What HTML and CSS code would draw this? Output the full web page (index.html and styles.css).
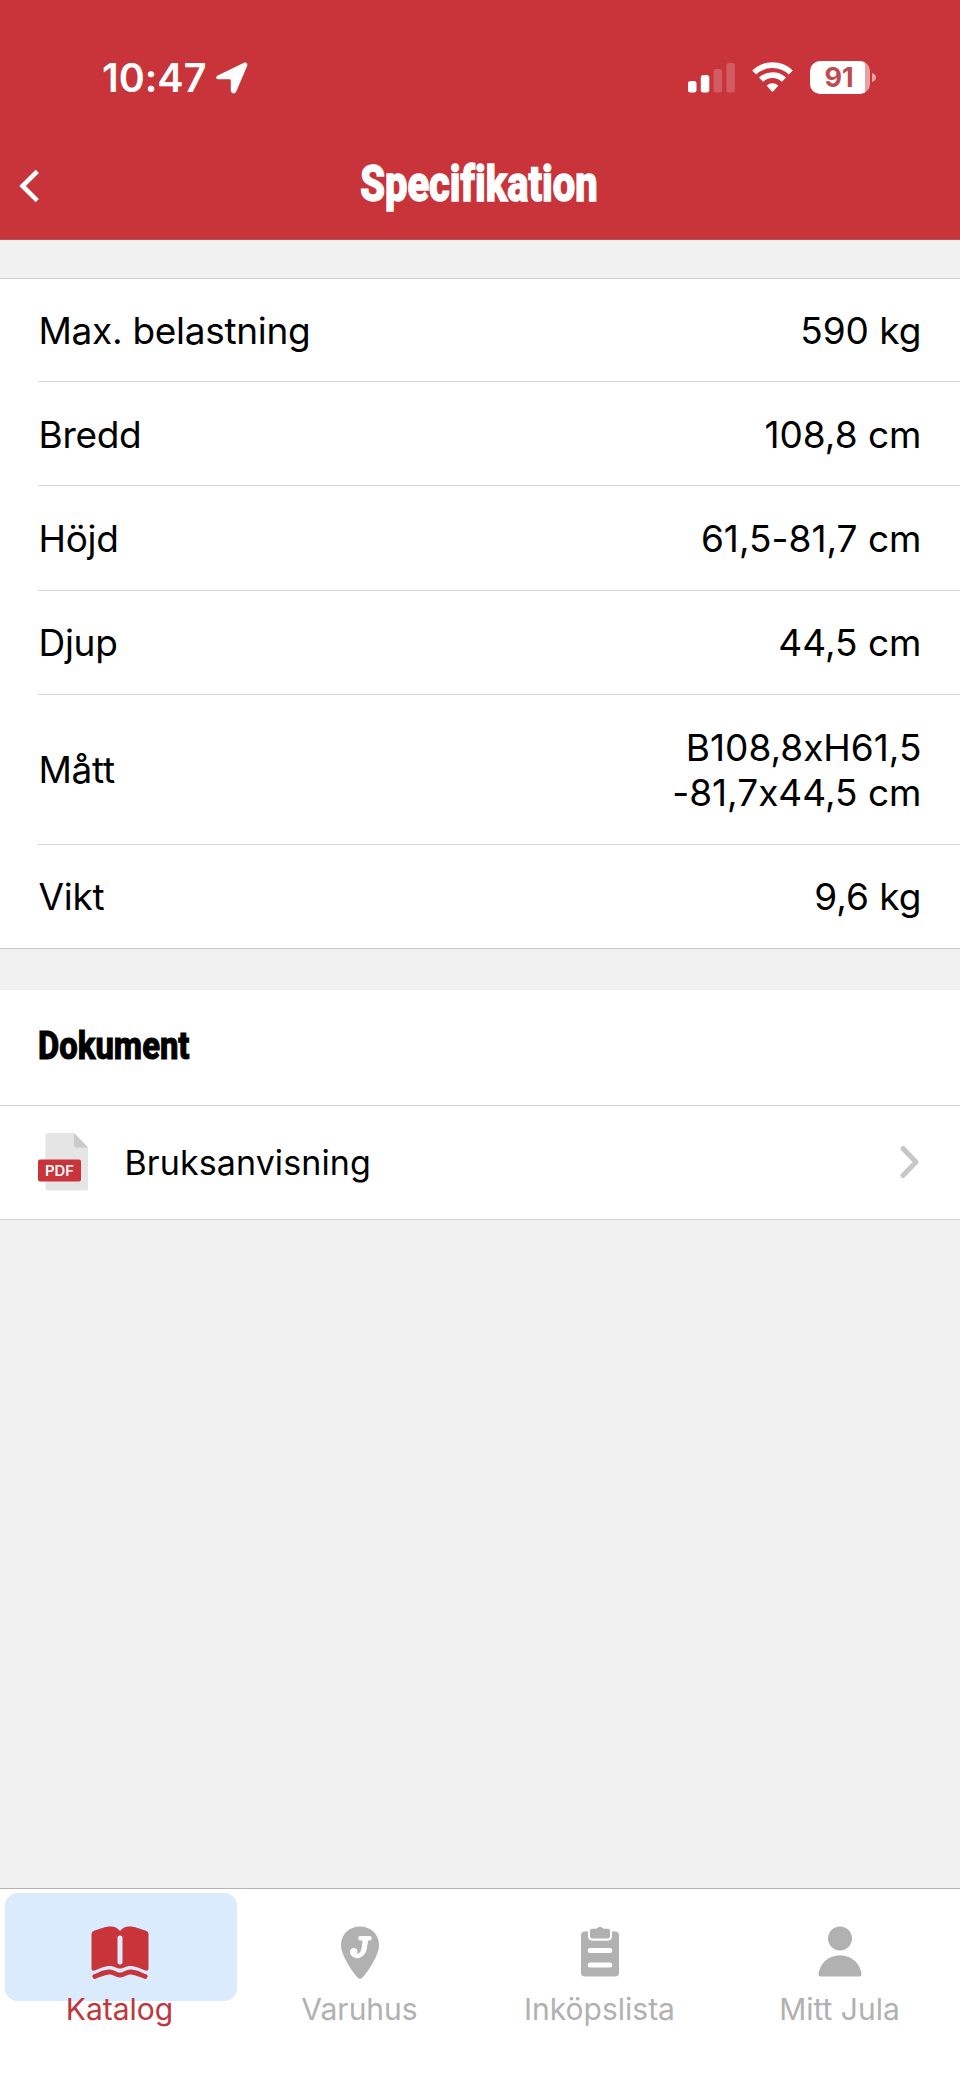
FILE: index.html
```html
<!DOCTYPE html>
<html lang="sv">
<head>
<meta charset="utf-8">
<title>Specifikation</title>
<link rel="stylesheet" href="styles.css">
</head>
<body>
<div class="app">
  <header class="header">
    <div class="status">
      <div class="status-left">
        <span class="time">10:47</span>
        <svg class="location" width="32" height="32" viewBox="0 0 32 32"><path d="M2.2 13.2 28 .7C30.400 -.3 32 1.400 31.200 3.700L20.300 29.500C19.200 32.400 14.800 31.900 14.800 28.600V18.600Q14.800 17.300 13.500 17.300H3C-.3 17.300 -.9 14.500 2.200 13.200Z" fill="#fff"/></svg>
      </div>
      <div class="status-right">
        <svg width="48" height="32" viewBox="0 0 48 32"><g fill="#fff"><rect x="1" y="20" width="8.500" height="11.500" rx="2.500"/><rect x="13.800" y="14" width="8.500" height="17.500" rx="2.500"/><g opacity=".2"><rect x="26.600" y="8" width="8.500" height="23.500" rx="2.500"/><rect x="39.400" y="2" width="8.500" height="29.500" rx="2.500"/></g></g></svg>
        <svg width="41" height="32" viewBox="0 0 41 32"><g fill="none" stroke="#fff" stroke-width="5.800"><path d="M2.200 11.500A26.500 26.500 0 0 1 38.800 11.500"/><path d="M9 18.700A16.500 16.500 0 0 1 32 18.700"/></g><path d="M14.600 24.600Q20.500 19.800 26.400 24.600L21.600 29.900Q20.500 31 19.400 29.900Z" fill="#fff"/></svg>
        <div class="battery"><span class="battery-level">91</span><svg class="battery-nub" width="4" height="9" viewBox="0 0 4 9"><path d="M0 0Q4 1.500 4 4.500T0 9Z" fill="#fff"/></svg></div>
      </div>
    </div>
    <nav class="navbar">
      <svg class="back" width="24" height="36" viewBox="0 0 24 36"><path d="M20.300 3.300 5.500 18 20.300 32.700" fill="none" stroke="#fff" stroke-width="4.600"/></svg>
      <h1 class="title">Specifikation</h1>
    </nav>
  </header>
  <main class="content">
    <dl class="specs">
      <div class="spec"><dt>Max. belastning</dt><dd>590 kg</dd></div>
      <div class="spec"><dt>Bredd</dt><dd>108,8 cm</dd></div>
      <div class="spec"><dt>Höjd</dt><dd>61,5-81,7 cm</dd></div>
      <div class="spec"><dt>Djup</dt><dd>44,5 cm</dd></div>
      <div class="spec spec-tall"><dt>Mått</dt><dd>B108,8xH61,5<br>-81,7x44,5 cm</dd></div>
      <div class="spec"><dt>Vikt</dt><dd>9,6 kg</dd></div>
    </dl>
    <section class="documents">
      <h2 class="section-head"><span class="section-title">Dokument</span></h2>
      <a class="document">
        <svg class="pdf" width="51" height="58" viewBox="0 0 51 58"><path d="M10.500 0H36L50 14V55Q50 57.500 47.500 57.500H10Q7.500 57.500 7.500 55V3Q7.500 0 10.500 0Z" fill="#e5e5e5"/><path d="M36 0 50 14.500H38.500Q36 14.500 36 12Z" fill="#cacaca"/><rect x="0" y="26.500" width="43" height="22" rx="2" fill="#c9333a"/><text x="21.500" y="42.500" text-anchor="middle" textLength="29" lengthAdjust="spacingAndGlyphs" class="pdf-text">PDF</text></svg>
        <span class="document-name">Bruksanvisning</span>
        <svg class="chevron" width="20" height="34" viewBox="0 0 20 34"><path d="M3 3.500 16 17 3 30.500" fill="none" stroke="#c7c7c7" stroke-width="5" stroke-linecap="round" stroke-linejoin="round"/></svg>
      </a>
    </section>
  </main>
  <footer class="tabs">
    <a class="tab tab-active">
      <svg width="58" height="54" viewBox="0 0 58 54"><path d="M.5 8Q.5 5.500 3 4.700C10 2.800 13.500 .5 19.500 .5 24 .5 27 2.500 29 5 31 2.500 34 .5 38.500 .5 44.500 .5 48 2.800 55 4.700Q57.500 5.500 57.500 8V42.500Q57.500 45.500 54.500 44.500C49 42.500 45 40 39 40 34.500 40 33 42.500 29 42.500S23.500 40 19 40C13 40 9 42.500 3.500 44.500Q.5 45.500 .5 42.500Z" fill="#c9333a"/><path d="M29 12V36" stroke="#dcecfc" stroke-width="5" stroke-linecap="round"/><path d="M3.800 50.500C9 48.500 13.500 46 18.500 46 23 46 25 49 29 49S35 46 39.500 46C44.500 46 49 48.500 54.200 50.500" fill="none" stroke="#c9333a" stroke-width="4.800" stroke-linecap="round"/></svg>
      <span class="tab-label">Katalog</span>
    </a>
    <a class="tab">
      <svg width="58" height="54" viewBox="0 0 58 54"><path d="M29 .5C39.800 .5 48 8.600 48 19 48 29 38.500 43.500 31.500 51.500Q29 54 26.500 51.500C19.500 43.500 10 29 10 19 10 8.600 18.200 .5 29 .5Z" fill="#b1b1b1"/><path d="M29.500 12.300H38.500M35 12.500 33 22.500C31.800 29.500 27.500 30.300 25.300 29.800 21.800 29.300 20.600 26.700 22.300 24.800" fill="none" stroke="#fff" stroke-width="4.500" stroke-linecap="round"/><circle cx="22.800" cy="25.500" r="3.600" fill="#fff"/><path d="M31.800 12 37.500 12 35.500 24Q34 29 30 29.500Z" fill="#fff"/></svg>
      <span class="tab-label">Varuhus</span>
    </a>
    <a class="tab">
      <svg width="58" height="54" viewBox="0 0 58 54"><rect x="10" y="5.500" width="38" height="45" rx="4" fill="#b1b1b1"/><path d="M17 4.500V10Q17 14.800 21.800 14.800H36.200Q41 14.800 41 10V4.500Z" fill="#fff"/><path d="M21 2.700H24.500Q26.200 2.700 27 1.500 29 -.2 31 1.500 31.800 2.700 33.500 2.700H37Q39 2.700 39 4.700V10Q39 12.500 36.500 12.500H21.500Q19 12.500 19 10V4.700Q19 2.700 21 2.700Z" fill="#b1b1b1"/><path d="M19.200 24.500H38.800M19.200 39H38.800" stroke="#fff" stroke-width="5" stroke-linecap="round"/></svg>
      <span class="tab-label">Inköpslista</span>
    </a>
    <a class="tab">
      <svg width="58" height="54" viewBox="0 0 58 54"><g fill="#b1b1b1"><circle cx="29" cy="12.500" r="12"/><path d="M9.300 50.500Q7.500 50.500 7.500 48.500C8.500 37.500 17.500 29.200 29 29.200S49.500 37.500 50.500 48.500Q50.500 50.500 48.700 50.500Z"/></g></svg>
      <span class="tab-label">Mitt Jula</span>
    </a>
  </footer>
</div>
</body>
</html>
```
FILE: styles.css
```css
* { box-sizing: border-box; }
body { margin: 0; background: #f1f1f1; color: #000; font-family: Inter, "Liberation Sans", sans-serif; font-size: 37px; line-height: 45px; font-feature-settings: "calt" 0, "liga" 0; }
.app { width: 960px; height: 2087px; display: flex; flex-direction: column; }
svg { display: block; flex: none; overflow: visible; }
.header { height: 240px; flex: none; background: #c9333a; border-bottom: 1px solid #b0545a; color: #fff; }
.status { display: flex; justify-content: space-between; height: 124px; padding: 61px 84px 0 102px; }
.status-left { display: flex; gap: 10px; }
.time { font-size: 39.500px; font-weight: 600; line-height: 34px; }
.location { margin-top: 1px; }
.status-right { display: flex; gap: 17px; }
.battery { display: flex; align-items: center; gap: 2px; height: 33px; }
.battery-level { width: 60px; height: 33px; border-radius: 10px; background: linear-gradient(to right, #fff 55px, #e7a0a4 55px); color: #c04a50; font-size: 27px; font-weight: 700; line-height: 33px; text-align: center; padding-right: 2px; }
.battery-nub { opacity: .55; }
.navbar { display: grid; grid-template-columns: 60px 1fr 60px; height: 115px; }
.back { margin: 44px 0 0 17px; }
.title { margin: 30px 0 0; font-family: Roboto, sans-serif; font-size: 50px; font-weight: 800; line-height: 60px; text-align: center; transform: translateX(-1px) scaleX(.797); -webkit-text-stroke: 1.500px currentColor; }
.content { flex: 1; }
.specs { margin: 38px 0 0; background: #fff; border-top: 1px solid #d2d2d2; border-bottom: 1px solid #c8c8c8; }
.spec { display: flex; align-items: center; justify-content: space-between; height: 104.300px; margin-left: 38px; padding: 1px 38.500px 0 0; border-bottom: 1px solid #d6d6d6; }
.spec:first-child { height: 103px; padding-top: 0; }
.spec-tall { height: 149.800px; }
.spec:last-child { height: 103.300px; border-bottom: 0; }
.spec dt { letter-spacing: -.3px; padding-left: .5px; }
.spec dd { margin: 0; text-align: right; }
.documents { margin-top: 41px; background: #fff; }
.section-head { height: 116px; margin: 0; padding: 33px 38px 0; border-bottom: 1px solid #d2d2d2; font: 800 39px/46px Roboto, sans-serif; }
.section-title { display: inline-block; transform: scaleX(.84); transform-origin: 0 0; -webkit-text-stroke: 1px currentColor; }
.document { display: flex; align-items: center; height: 114px; padding: 0 40px 0 38px; border-bottom: 1px solid #d2d2d2; font-size: 34px; }
.document-name { margin-left: 35.500px; flex: 1; letter-spacing: .1px; }
.pdf-text { font: 600 14px Inter, sans-serif; fill: #fff; }
.tabs { display: grid; grid-template-columns: repeat(4, 1fr); height: 199px; flex: none; border-top: 1px solid #b4b4b4; background: #fff; color: #b1b1b1; }
.tab { position: relative; z-index: 0; display: flex; flex-direction: column; align-items: center; padding: 37px 1px 0 0; }
.tab-active { color: #c0363d; }
.tab-active::before { content: ""; position: absolute; z-index: -1; top: 4px; left: 5px; width: 232px; height: 108px; border-radius: 13px; background: #d9ebfd; }
.tab-label { margin-top: 11px; font-size: 30px; line-height: 36px; }
```
